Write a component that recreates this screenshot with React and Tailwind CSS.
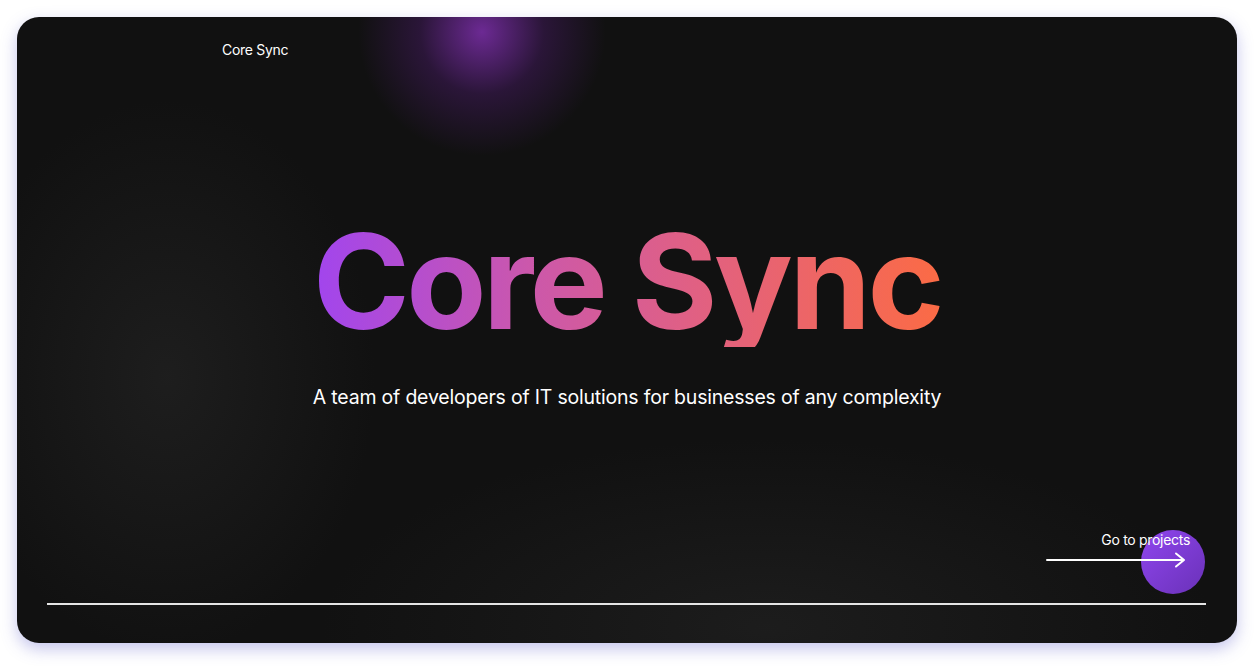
export default function App() {
  return (
    <div className="min-h-screen bg-white p-[17px]" style={{ fontFamily: 'Inter, "Noto Sans", sans-serif' }}>
      <div className="relative h-[626px] w-[1220px] overflow-hidden rounded-[22px] bg-[#111111] shadow-[0_6px_16px_rgba(90,90,200,0.35)]">
        {/* glows */}
        <div className="pointer-events-none absolute left-[340px] top-[-110px] h-[250px] w-[250px] rounded-full bg-[radial-gradient(circle,rgba(124,46,170,0.85)_0%,rgba(90,30,130,0.35)_35%,rgba(17,17,17,0)_70%)]" />
        <div className="pointer-events-none absolute left-[-60px] top-[80px] h-[560px] w-[420px] rounded-full bg-[radial-gradient(ellipse,rgba(40,40,40,0.55)_0%,rgba(17,17,17,0)_70%)]" />
        <div className="pointer-events-none absolute left-[300px] top-[420px] h-[380px] w-[900px] rounded-full bg-[radial-gradient(ellipse,rgba(36,36,36,0.6)_0%,rgba(17,17,17,0)_70%)]" />

        <div className="relative flex h-full flex-col">
          <header className="pl-[205px] pt-[20px]">
            <span className="text-[14px] tracking-[-0.3px] text-white">Core Sync</span>
          </header>

          <main className="flex flex-col items-center pt-[155px]">
            <h1 className="bg-[linear-gradient(90deg,#a145ee_0%,#cc58aa_35%,#e06084_60%,#fb6b45_100%)] bg-clip-text text-[131px] font-bold leading-none tracking-[-3.5px] text-transparent">
              Core Sync
            </h1>
            <p className="mt-[36px] text-[19.5px] tracking-[-0.2px] text-white">
              A team of developers of IT solutions for businesses of any complexity
            </p>
          </main>

          <div className="mt-auto pr-[31px] pl-[30px] pb-[38px]">
            <div className="flex justify-end">
              <a className="relative flex w-[160px] flex-col items-end">
                <span className="absolute right-[1px] top-[1px] h-[64px] w-[64px] rounded-full bg-[linear-gradient(135deg,#8f46ee_0%,#6a31b8_100%)]" />
                <span className="relative mr-[16px] text-[14px] tracking-[-0.3px] text-white">Go to projects</span>
                <svg className="relative mt-[2px] mr-[20px]" width="140" height="16" viewBox="0 0 140 16" fill="none">
                  <path d="M1 8H138M130 1.5L138 8L130 14.5" stroke="white" strokeWidth="2" strokeLinecap="round" strokeLinejoin="round" />
                </svg>
              </a>
            </div>
            <div className="mt-[35px] h-[2px] w-full bg-[#e5e5e5]" />
          </div>
        </div>
      </div>
    </div>
  )
}
